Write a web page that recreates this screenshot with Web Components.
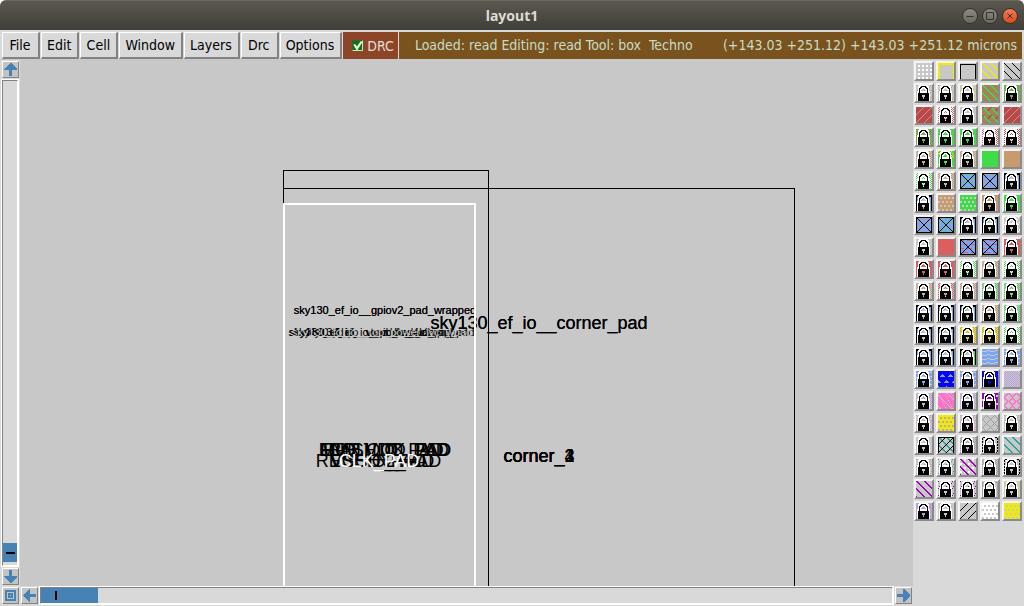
<!DOCTYPE html>
<html lang="en">
<head>
<meta charset="utf-8">
<title>layout1</title>
<style>
html, body { margin: 0; background: #fff; }
body { font: 14px/16px "DejaVu Sans Condensed", "DejaVu Sans", sans-serif; font-stretch: condensed; color: #000; }
</style>
</head>
<body>
<layout-window>
  <title-bar slot="title">layout1</title-bar>
  <menu-bar slot="menu">
    <menu-button>File</menu-button>
    <menu-button>Edit</menu-button>
    <menu-button>Cell</menu-button>
    <menu-button>Window</menu-button>
    <menu-button>Layers</menu-button>
    <menu-button>Drc</menu-button>
    <menu-button>Options</menu-button>
    <drc-toggle>DRC</drc-toggle>
    <status-line><span>Loaded: read Editing: read Tool: box  Techno</span><span slot="position">(+143.03 +251.12) +143.03 +251.12 microns</span></status-line>
  </menu-bar>
  <scroll-bar slot="vertical" direction="vertical"></scroll-bar>
  <layout-canvas slot="canvas"></layout-canvas>
  <arrow-button slot="corner" icon="zoom" label="Zoom to view"></arrow-button>
  <scroll-bar slot="horizontal" direction="horizontal"></scroll-bar>
  <layer-palette slot="palette"></layer-palette>
</layout-window>
<script>
class Base extends HTMLElement {
  constructor() { super(); this.attachShadow({ mode: 'open' }); }
  connectedCallback() { this.shadowRoot.innerHTML = this.render(); }
}

customElements.define('layout-window', class extends Base {
  render() {
    return `<style>
      :host { display: flex; flex-direction: column; min-height: 100vh; background: #d9d9d9; border-radius: 6px 6px 0 0; overflow: hidden; }
      main { flex: 1; display: grid; grid-template-columns: 20px minmax(0, 1fr) 111px; grid-template-rows: minmax(0, 1fr) 20px; }
      .palette { grid-column: 3; grid-row: 1 / 3; }
      .v { display: grid; } .c { display: grid; min-height: 0; }
      .corner { padding: 1px 0 0 2px; grid-column: 1; grid-row: 2; }
      .h { grid-column: 2; grid-row: 2; display: grid; }
    </style>
    <slot name="title"></slot><slot name="menu"></slot>
    <main>
      <div class="v"><slot name="vertical"></slot></div>
      <div class="c"><slot name="canvas"></slot></div>
      <div class="palette"><slot name="palette"></slot></div>
      <div class="corner"><slot name="corner"></slot></div>
      <div class="h"><slot name="horizontal"></slot></div>
    </main>`;
  }
});

customElements.define('title-bar', class extends Base {
  render() {
    return `<style>
      :host { display: grid; grid-template-columns: 1fr auto 1fr; align-items: center; height: 30px; box-sizing: border-box; border-top: 1px solid #68665d; background: linear-gradient(#5a584f, #3f3e38); color: #dfdbd2; font: bold 14px/18px "Noto Sans", sans-serif; }
      h1 { font: inherit; margin: 0; grid-column: 2; }
      .controls { display: flex; gap: 4px; justify-content: flex-end; padding-right: 6px; }
      button { width: 16px; height: 16px; padding: 0; border: 1px solid #33322e; border-radius: 50%; background: linear-gradient(#8b897f, #6b6960); display: grid; place-items: center; }
      .close { background: linear-gradient(#f47c54, #df4b1c); }
      svg { display: block; fill: none; stroke: #32312d; }
    </style>
    <h1><slot></slot></h1>
    <div class="controls">
      <button aria-label="Minimize"><svg width="14" height="14"><path d="M3.500 7.500h7"/></svg></button>
      <button aria-label="Maximize"><svg width="14" height="14"><path d="M3.500 3.500h7v7h-7z"/></svg></button>
      <button class="close" aria-label="Close"><svg width="14" height="14"><path d="M4.500 4.500l5 5M9.500 4.500l-5 5"/></svg></button>
    </div>`;
  }
});

customElements.define('menu-bar', class extends Base {
  render() {
    return `<style>
      :host { display: flex; gap: 1px; height: 30px; box-sizing: border-box; padding: 2px 2px 0; background: #d9d9d9; border-bottom: 1px solid #c8c8c8; }
    </style><slot></slot>`;
  }
});

customElements.define('menu-button', class extends Base {
  render() {
    return `<style>
      :host { display: flex; flex: none; }
      button { font: inherit; color: inherit; margin: 0; min-width: 38px; padding: 0 6px 0 5px; background: #d9d9d9; border: solid; border-width: 1px 2px 2px 1px; border-color: #fff #828282 #828282 #fff; }
    </style><button><slot></slot></button>`;
  }
});

customElements.define('drc-toggle', class extends Base {
  render() {
    return `<style>
      :host { display: flex; flex: none; background: #8c4627; color: #e6ded6; }
      label { display: flex; align-items: center; gap: 4px; padding: 0 4px 0 9px; }
      input { appearance: none; margin: 0; width: 11px; height: 11px; background: #008000; border: 1px solid; border-color: #505050 #d9d9d9 #d9d9d9 #505050; display: grid; }
      input:checked::before { content: ""; background: #fff; clip-path: polygon(0 40%, 20% 35%, 40% 60%, 85% 0, 100% 15%, 45% 100%, 35% 100%); }
    </style><label><input type="checkbox" checked><slot></slot></label>`;
  }
});

customElements.define('status-line', class extends Base {
  render() {
    return `<style>
      :host { display: flex; flex: 1; min-width: 0; align-items: center; gap: 16px; padding: 0 5px 2px 16px; background: #7a521e; color: #c6dcc8; white-space: pre; }
      div { flex: 1; min-width: 0; overflow: hidden; }
    </style><div><slot></slot></div><slot name="position"></slot>`;
  }
});

const ARROWS = {
  up: 'M6 0h1l6 6v1h-5v6h-3v-6h-5v-1z',
  down: 'M5 0h3v6h5v1l-6 6h-1l-6-6v-1h5z',
  left: 'M0 6v1l6 6h1v-5h6v-3h-6v-5h-1z',
  right: 'M13 6v1l-6 6h-1v-5h-6v-3h6v-5h1z',
  zoom: 'M1 1h11v11h-11zM3 3v7h7v-7zM4 4h5v5h-5zM6 6v1h1v-1z'
};
customElements.define('arrow-button', class extends Base {
  render() {
    return `<style>
      :host { display: block; width: 17px; height: 17px; flex: none; }
      button { display: block; width: 100%; height: 100%; padding: 1px; background: #c3c3c3; border: 1px solid; border-color: #fff #828282 #828282 #fff; }
      svg { display: block; fill: #4682b4; fill-rule: evenodd; shape-rendering: crispEdges; }
    </style>
    <button aria-label="${this.getAttribute('label')}"><svg width="13" height="13"><path d="${ARROWS[this.getAttribute('icon')]}"/></svg></button>`;
  }
});

customElements.define('scroll-bar', class extends Base {
  render() {
    const v = this.getAttribute('direction') === 'vertical';
    return `<style>
      :host { display: flex; gap: 2px; flex-direction: ${v ? 'column' : 'row'}; padding: ${v ? '1px 1px 1px 2px' : '1px 1px 1px 1px'}; }
      .trough { flex: 1; display: flex; flex-direction: ${v ? 'column' : 'row'}; justify-content: ${v ? 'flex-end' : 'flex-start'}; border: 1px solid; border-color: #828282 #fff #fff #828282; outline: 1px solid #fff; ${v ? 'padding-bottom: 3px; margin-right: 1px' : 'margin-bottom: 1px'}; }
      .thumb { background: #4682b4; display: grid; place-items: center; ${v ? 'height: 19px' : 'padding-right: 27px; width: 30px'}; }
      i { background: #000; ${v ? 'width: 9px; height: 2px' : 'width: 2px; height: 9px'}; }
    </style>
    <arrow-button icon="${v ? 'up' : 'left'}" label="${v ? 'Scroll up' : 'Scroll left'}"></arrow-button>
    <div class="trough"><div class="thumb"><i></i></div></div>
    <arrow-button icon="${v ? 'down' : 'right'}" label="${v ? 'Scroll down' : 'Scroll right'}"></arrow-button>`;
  }
});

customElements.define('layout-canvas', class extends Base {
  render() {
    return `<style>
      :host { display: block; position: relative; overflow: hidden; background: #c8c8c8; font-family: "Liberation Sans", Arial, sans-serif; font-stretch: normal; }
      svg { position: absolute; inset: 0; width: 100%; height: 100%; }
      path { fill: none; stroke: #000; shape-rendering: crispEdges; }
      .selected { stroke: #fff; stroke-width: 2; }
      .small { font-size: 11px; } .large { font-size: 18px; }
      text { text-anchor: middle; }
      .white { fill: #fff; } .grey { fill: #c8c8c8; }
    </style>
    <svg>
      <path d="M263.500 2000V110.500H468.500V2000M263.500 128.500H774.500V2000"/>
      <text class="large" x="519" y="269">sky130_ef_io__corner_pad</text>
      <text class="large" x="519" y="269">sky130_ef_io__corner_pad</text>
      <text class="small" x="365" y="254">sky130_ef_io__gpiov2_pad_wrapped</text>
      <text class="small" x="365" y="254">sky130_ef_io__gpiov2_pad_wrapped</text>
      <g class="small">
        <text x="358" y="276">sky130_ef_io__vccd_lvc_clamp_pad</text>
        <text x="362" y="276">sky130_ef_io__vssio_hvc_clamp_pad</text>
        <text x="358" y="276">sky130_ef_io__vdda_hvc_pad</text>
        <text x="342" y="276">sky130_fd_io__top_xres4v2</text>
        <text class="grey" x="362" y="276">sky130_fd_io__top_power_lvc_wpad</text>
      </g>
      <g class="large">
        <text x="365" y="396">ENBLOCK_PAD</text>
        <text x="365" y="396">FLASH_IO_PAD</text>
        <text x="366" y="396">IRQ_VDD_PAD</text>
        <text x="362" y="396">MPRJ_IO_PAD</text>
        <text x="355" y="407">RESETN_PAD</text>
        <text x="366" y="407">VSSIO2_PAD</text>
        <text x="358" y="407">VCCD_PAD</text>
        <text x="519" y="402">corner_1</text>
        <text x="519" y="402">corner_2</text>
        <text x="519" y="402">corner_3</text>
        <text x="519" y="402">corner_4</text>
        <text class="white" x="359" y="407">CLK_PAD</text>
      </g>
      <path class="selected" d="M264 2000V144H455V2000"/>
    </svg>`;
  }
});

const C = { _: '#c8c8c8', white: '#fff', black: '#000', yellow: '#f0ec00', green: '#3edc46', brown: '#a87f5c', crimson: '#b9474e', tan: '#c89b6e', red: '#dc5f5f', blue: '#7ba6f5', deep: '#0808f0', lav: '#bca0dc', pink: '#ff70c8', purple: '#a000b8', teal: '#20a5a0', grey: '#a0a0a0' };

/* Fill patterns: each returns a colour name for a pixel of a 16x16 stipple. */
const P = {
  solid: (x, y, a) => a,
  none: () => '_',
  grid: (x, y, a, b) => (x + 2) % 4 < 2 && (y + 2) % 4 < 2 ? a : b,
  holes: (x, y, a, b) => y % 4 > 1 && (x + (y % 8 < 4 ? 0 : 2)) % 4 > 1 ? b : a,
  check: (x, y, a, b) => (x + y) % 2 ? a : b,
  diag: (x, y, a, b) => (x - y + 16) % 8 === 0 ? a : b,
  thick: (x, y, a, b) => (x - y + 16) % 8 < 2 ? a : b,
  dotted: (x, y, a, b) => (x - y + 16) % 8 < 2 ? a : x % 4 < 2 && y % 4 < 2 ? b : '_',
  adiag: (x, y, a, b) => (x + y) % 8 === 7 ? a : b,
  frame: (x, y, a, b) => y === 1 || (y > 1 && (x === 0 || x === 15)) ? a : b,
  band: (x, y, a, b) => y < 2 || x < 2 || x > 14 ? a : b,
  stitch: (x, y, a, b) => (x < 1 || x > 14 || y < 1 || y > 14) && (x + y) % 3 ? a : b,
  sparse: (x, y, a, b) => (x * 3 + y * 5) % 7 === 0 ? a : b,
  weave: (x, y, a, b) => (x + y) % 8 < 2 && y % 8 < 4 ? 'crimson' : (x - y + 16) % 8 < 2 ? a : b,
  cross: (x, y, a, b) => x === 0 || y === 0 || x === 15 || y === 15 || x === y || x + y === 15 ? 'black' : y % 4 === 1 && (x + y) % 8 < 5 ? b : a,
  edge: (x, y, a, b) => x === 0 || (y < 2 && x % 3) || x === 15 ? 'black' : x < 2 || x > 13 ? a : (x + y) % 5 ? '_' : b,
  wave: (x, y, a, b) => (y + (x % 8 > 4 ? 1 : 0)) % 4 === 2 ? b : a,
  tri: (x, y, a, b) => y % 6 > 2 && Math.abs((x + (y > 8 ? 4 : 0)) % 8 - 4) <= y % 6 - 3 ? b : a,
  chain: (x, y, a, b) => Math.abs(x % 8 - 4) + Math.abs(y % 8 - 4) === 4 ? a : b,
  rope: (x, y, a, b) => { const d = Math.abs(x % 8 - 4) + Math.abs(y % 8 - 4); return d === 4 || d === 5 ? a : b; },
  blob: (x, y, a, b) => (x * 3 + y * 5) % 13 === 0 || (x - y + 16) % 11 === 3 ? b : a,
  lattice: (x, y, a, b) => x === 0 || y === 0 || x === 15 || (x + y) % 8 === 7 ? 'black' : (x - y + 16) % 8 < 2 ? a : b
};

const LOCK = [
  '...WWWWWWWWW....',
  '..WWWKKKKKWWW...',
  '..WWKKWWWKKWW...',
  '..WKKWW.WWKKW...',
  '..WKWW...WWKW...',
  '..WKW.....WKW...',
  '.WWKWWWWWWWKWW..',
  '.WWKWWWWWWWKWW..',
  '.WKKKKKKKKKKKW..',
  '.WKKKKKKKKKKKW..',
  '.WKKKK...KKKKW..',
  '.WKKKK...KKKKW..',
  '.WKKKKK.KKKKKW..',
  '.WKKKKK.KKKKKW..',
  '.WKKKKKKKKKKKW..',
  '.WKKKKKKKKKKKW..'
];

customElements.define('layer-swatch', class extends Base {
  render() {
    const [kind, a = '_', b = '_'] = this.getAttribute('fill').split(' ');
    const locked = this.hasAttribute('locked');
    let runs = '';
    for (let y = 0; y < 16; y++) {
      let start = 0, last = null;
      for (let x = 0; x <= 16; x++) {
        let c = null;
        if (x < 16) {
          const l = locked ? LOCK[y][x] : '.';
          c = l === 'W' ? 'white' : l === 'K' ? 'black' : P[kind](x, y, a, b);
        }
        if (c !== last) {
          if (last) runs += `<rect x="${start}" y="${y}" width="${x - start}" height="1" fill="${C[last]}"/>`;
          start = x; last = c;
        }
      }
    }
    return `<style>
      :host { display: block; }
      button { display: block; width: 20px; height: 20px; padding: 0; border: solid; border-width: 2px; border-color: #f4f4f4 #8a8a8a #8a8a8a #f4f4f4; background: #c8c8c8; }
      svg { display: block; shape-rendering: crispEdges; }
    </style><button aria-label="Layer"><svg width="16" height="16">${runs}</svg></button>`;
  }
});

/* Five layers per row; a leading * marks a locked layer. */
const LAYERS = [
  'grid white|band yellow|frame black|thick yellow|diag black',
  '*sparse tan|*sparse tan|*sparse yellow|thick green brown|*check brown green',
  'adiag tan crimson|*check red white|*none|weave green brown|adiag tan crimson',
  '*check green brown|*solid green|*solid green|*check red white|*check crimson white',
  '*check tan|*blob green yellow|*check tan|solid green|solid tan',
  '*check green white|*check tan|cross blue green|cross blue tan|*edge blue blue',
  '*edge blue blue|holes tan|holes green|*solid tan|*solid green',
  'cross blue tan|cross blue green|*edge blue blue|*edge blue green|*sparse white',
  '*none|solid red|cross blue red|cross blue red|*solid red',
  '*solid red|*solid red|*check green white|*check tan|*check green white',
  '*check tan|*check red|*check tan|*check green|*check green',
  '*edge blue blue|*edge blue blue|*edge blue green|*check tan|*check green',
  '*edge blue blue|*edge blue blue|*check tan yellow|*check tan yellow|*check green white',
  '*edge blue blue|*edge blue blue|*edge green blue|wave blue|*wave blue',
  '*wave blue|tri deep blue|*wave blue|*solid deep|check lav',
  '*check lav|blob pink|*check lav|*holes purple|rope pink',
  '*sparse pink|holes yellow lav|*sparse pink|chain grey|*sparse tan',
  '*none|lattice teal|*check grey|*stitch black|thick teal',
  '*sparse tan|*sparse teal|dotted purple white|*check grey|*stitch black',
  'thick purple|*sparse purple|*sparse purple|*frame grey|*sparse yellow',
  '*solid lav|*none|adiag black|holes white|holes yellow'
].join('|').split('|');

customElements.define('layer-palette', class extends Base {
  render() {
    return `<style>
      :host { display: grid; grid-template-columns: repeat(5, 20px); gap: 2px; padding: 1px; align-content: start; }
    </style>` + LAYERS.map(l => `<layer-swatch fill="${l.replace('*', '')}"${l[0] === '*' ? ' locked' : ''}></layer-swatch>`).join('');
  }
});
</script>
</body>
</html>
